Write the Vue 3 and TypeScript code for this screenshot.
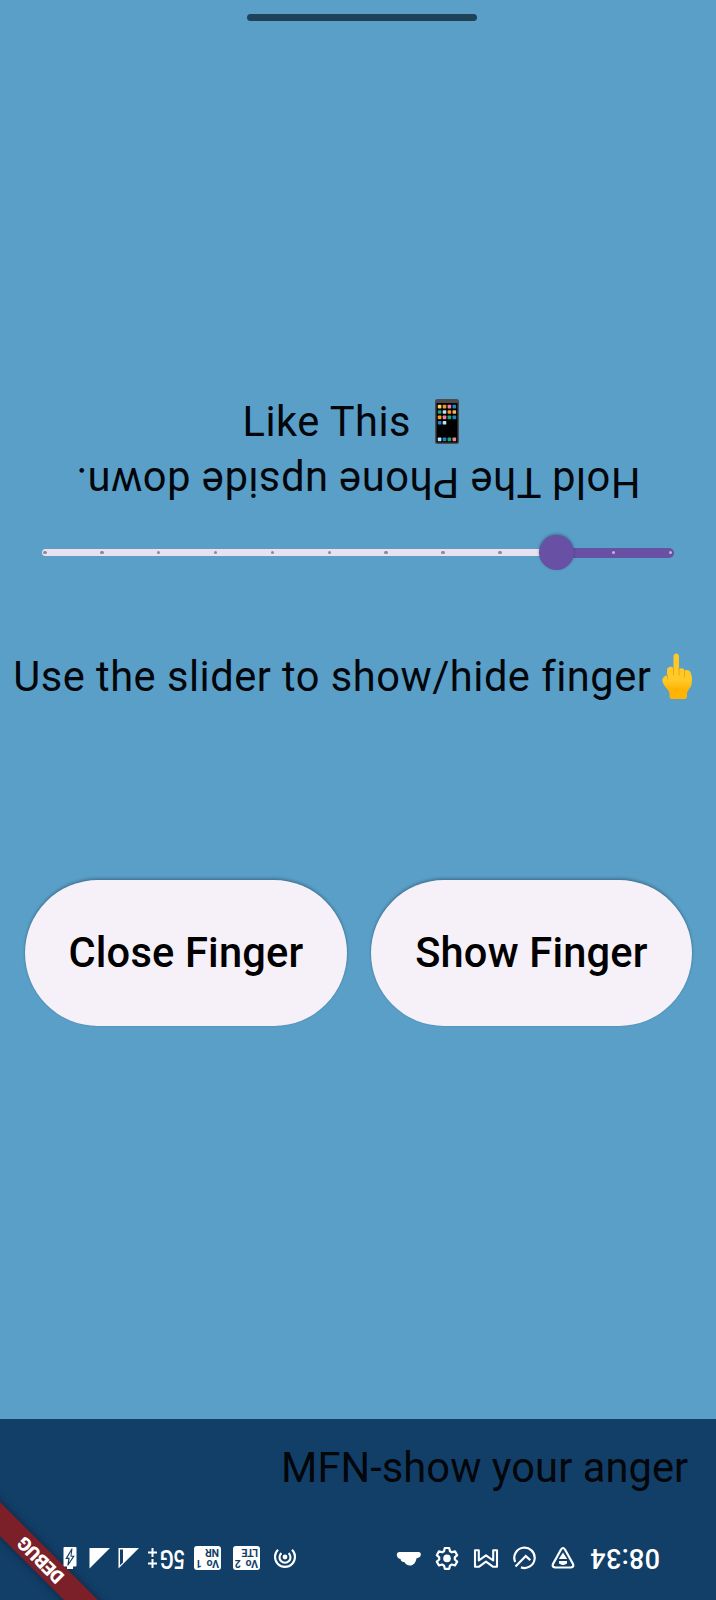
<script setup lang="ts">
import { computed, ref } from 'vue'

const divisions = 11
const value = ref(2)
const activePercent = computed(() => (value.value / divisions) * 100)
const ticks = Array.from({ length: divisions + 1 }, (_, i) => ({
  id: i,
  left: (i / divisions) * 100,
  active: i > divisions - value.value,
}))

const appColors = ['#f6cf7a', '#f59a23', '#f27fa0', '#1f86c8', '#19a974', '#b9e3f7', '#f59a23', '#f6b55a', '#f59a23', '#f27fa0', '#19a974', '#1f86c8', '#1f86c8', '#b9e3f7']
const dockColors = ['#b9e3f7', '#1f86c8', '#19a974', '#f27fa0']
</script>

<template>
  <div class="screen">
    <div class="home-row"><div class="home-bar"></div></div>

    <main class="content">
      <div class="line like">
        <span class="like-text">Like This</span>
        <svg class="phone" width="26" height="47" viewBox="0 0 26 47">
          <rect x="1" y="1" width="24" height="45" rx="2.5" fill="#4b4b4d" />
          <rect x="2.5" y="5" width="21" height="39.5" fill="#000" />
          <rect v-for="(c, i) in appColors" :key="'a' + i" :x="3.8 + (i % 4) * 4.9" :y="6.8 + Math.floor(i / 4) * 5.4" width="3.6" height="3.6" rx=".7" :fill="c" />
          <rect v-for="(c, i) in dockColors" :key="'d' + i" :x="3.8 + i * 4.9" y="39.5" width="3.6" height="3.8" rx=".7" :fill="c" />
        </svg>
      </div>
      <div class="line hold">Hold The Phone upside down.</div>

      <div class="slider">
        <div class="rail">
          <div class="active" :style="{ width: activePercent + '%' }"></div>
          <i v-for="t in ticks" :key="t.id" class="tick" :class="{ on: t.active }" :style="{ left: t.left + '%' }"></i>
          <div class="thumb" :style="{ right: activePercent + '%' }"></div>
        </div>
      </div>

      <div class="line use">
        <span class="use-text">Use the slider to show/hide finger</span>
        <svg class="finger" width="32" height="48" viewBox="0 0 32 48">
          <defs>
            <linearGradient id="skin" x1="0" y1="0" x2="0" y2="1">
              <stop offset=".6" stop-color="#ffc927" />
              <stop offset=".78" stop-color="#ffb404" />
            </linearGradient>
          </defs>
          <path d="M12.500 22V4.500c0-4 5.500-4 5.500 0V17c2-1.500 5-1 5.500 1.500 2.500-1.500 6 0 6.500 3 1.500 4 1 8 .3 12-.8 3-4.300 5-4.300 8v3c0 1.500-.7 2.500-2.200 2.500H11c-1.500 0-2.500-1-2.500-2.500v-3C8.500 38 3 35 1.700 30c-1-3 .8-6 4.300-6.500V17.500c1-3.500 5.500-3.500 6.500-1z" fill="url(#skin)" />
          <path d="M12.500 16v7M18 16v7M23.500 18.500V25M6.500 23v4" fill="none" stroke="#e9a51b" stroke-width="1" stroke-linecap="round" />
        </svg>
      </div>

      <div class="buttons">
        <button class="close" type="button"><span>Close Finger</span></button>
        <button class="show" type="button"><span>Show Finger</span></button>
      </div>
    </main>

    <footer class="bar">
      <div class="title"><span>MFN-show your anger</span></div>
      <div class="status">
        <svg class="battery" width="14" height="24" viewBox="0 0 14 24">
          <path d="M1.500 1h11A1 1 0 0 1 13.500 2v17.500a1 1 0 0 1-1 1H10V23H4v-2.500H1.500a1 1 0 0 1-1-1V2a1 1 0 0 1 1-1z" fill="#fff" />
          <path d="M8.500 2.500 2.300 13h3l-1 6.500h1L11.800 9.800H8.500l1-7.300z" fill="#123f68" />
          <path d="M8 5.500 4.500 11.800h2.200L6 16.500l3.700-5.700H7.500z" fill="#fff" />
        </svg>
        <svg class="sig1" width="22" height="24" viewBox="0 0 22 24"><path d="M.5 2H21L.5 22.500z" fill="#fff" /></svg>
        <svg class="sig2" width="22" height="24" viewBox="0 0 22 24">
          <path d="M.5 2H21L.5 22.500z" fill="#fff" />
          <path d="M2 3.500h3v13L2 19.300z" fill="#123f68" />
        </svg>
        <svg class="plus" width="9" height="24" viewBox="0 0 9 24"><path d="M0 6.500h9M4.500 2v9M0 17.500h9M4.500 13v9" stroke="#fff" stroke-width="2" /></svg>
        <span class="net">5G</span>
        <span class="vo v1"><span class="r1"><b>Vo</b><b>1</b></span><b class="r2">NR</b></span>
        <span class="vo v2"><span class="r1"><b>Vo</b><b>2</b></span><b class="r2">LTE</b></span>
        <svg class="hotspot" width="24" height="24" viewBox="0 0 24 24">
          <circle cx="12" cy="11" r="2.400" fill="#fff" />
          <path d="M8.400 7.100a5.500 5.500 0 1 0 7.200 0M5 3.700a10 10 0 1 0 14 0" fill="none" stroke="#fff" stroke-width="2.100" />
        </svg>
        <span class="spacer"></span>
        <svg class="cloud" width="26" height="24" viewBox="0 0 26 24"><path d="M3.500 6h19C24.500 6 25.500 8 24.500 10c-.8 1.600-2.300 2-4 2.200-.5 4-3 7.300-6.500 7.300-2.700 0-4.500-1.500-5.700-3.500-2 .3-3.500-1-3.800-3C2 12.500.8 10.500.8 8.700.8 7 2 6 3.500 6z" fill="#fff" /></svg>
        <svg class="gear" width="24" height="24" viewBox="0 0 24 24">
          <path d="M9.800 2h4.400l.8 3.200 1.900 1.100 3.100-1 2.200 3.900-2.400 2.100v2.200l2.400 2.100-2.200 3.900-3.100-1-1.900 1.100-.8 3.200H9.800L9 19.600l-1.900-1.100-3.100 1-2.200-3.900 2.400-2.100v-2.200L1.800 9.200 4 5.300l3.100 1L9 5.200z" fill="none" stroke="#fff" stroke-width="2.200" stroke-linejoin="round" />
          <circle cx="12" cy="12.400" r="3.800" fill="#fff" />
        </svg>
        <svg class="mail" width="26" height="24" viewBox="0 0 26 24"><path d="M2 20.800h3.800L13 15.600l7.200 5.200H24V4.200h-3.800v10.300L13 9.400l-7.200 5.100V4.200H2z" fill="none" stroke="#fff" stroke-width="2.100" stroke-linejoin="round" /></svg>
        <svg class="nav" width="24" height="24" viewBox="0 0 24 24">
          <path d="M2.200 16A10.200 10.200 0 1 1 8 21.400M2.500 20.500l10.300-10.400 4.500 4" fill="none" stroke="#fff" stroke-width="2.200" />
        </svg>
        <svg class="tri" width="24" height="24" viewBox="0 0 24 24">
          <path d="M10 3.500q2-3 4 0l8 14.500q1.200 3-2 3.500H4q-3.200-.5-2-3.500z" fill="none" stroke="#fff" stroke-width="2.200" />
          <path d="m12 6.500 4.200 6.500H7.800zM8 15h8v2.500l-3 1.500h-2l-3-1.500z" fill="#fff" />
        </svg>
        <time class="clock">08:34</time>
      </div>
    </footer>

    <div class="debug"><span>DEBUG</span></div>
  </div>
</template>

<style>
body { margin: 0; background: #599fc8; }
</style>

<style scoped>
.screen { position: relative; display: flex; flex-direction: column; width: 716px; height: 1600px; overflow: hidden; background: #599fc8; color: #03060a; font-family: Roboto, sans-serif; font-size: 41.6px; }
.home-row { display: flex; box-sizing: border-box; height: 392px; padding: 14px 0 0 247px; }
.home-bar { width: 230px; height: 7px; border-radius: 4px; background: #1f4259; }
.content { display: flex; flex-direction: column; height: 1027px; }
.line { display: flex; height: 60px; line-height: 60px; white-space: nowrap; letter-spacing: .5px; flex: none; }
.like { padding-left: 242.500px; }
.like-text { width: 191.500px; }
.phone { margin-top: 6px; }
.hold { transform: rotate(180deg); padding-left: 75.500px; letter-spacing: .52px; }
.slider { height: 134px; flex: none; box-sizing: border-box; padding: 37px 45.500px 0 45px; }
.rail { position: relative; height: 7px; background: #e8e1ef; box-shadow: -3px 0 0 #e8e1ef; border-radius: 4px; }
.active { position: absolute; right: -3.500px; top: -1.500px; height: 10px; border-radius: 0 5px 5px 0; background: #6850a4; }
.tick { position: absolute; top: 2px; width: 3.400px; height: 3.400px; margin-left: -1.700px; border-radius: 50%; background: #8f8899; }
.tick.on { background: #c3b5df; }
.thumb { position: absolute; top: -14px; width: 35px; height: 35px; margin-right: -17.500px; border-radius: 50%; background: #6850a4; box-shadow: 0 -1px 3px rgba(0, 0, 0, .3); }
.use { padding-left: 13.300px; line-height: 62px; }
.use-text { width: 647.700px; }
.finger { margin-top: 6px; }
.buttons { display: flex; gap: 24px; padding: 174px 0 0 24.500px; }
button { flex: none; height: 146px; padding: 0; border: 0; border-radius: 73px; background: #f6f1f9; color: #000; font: 500 41.6px Roboto, sans-serif; letter-spacing: .2px; box-shadow: 0 -2px 3px rgba(0, 0, 0, .22), 0 0 2px rgba(0, 0, 0, .15); white-space: nowrap; }
button span { position: relative; top: -1px; left: .2px; }
.close { width: 322.500px; }
.show { width: 320.500px; }
.bar { height: 181px; background: #123f68; }
.title { display: flex; box-sizing: border-box; height: 127px; padding: 18.500px 0 0 281px; line-height: 60px; white-space: nowrap; letter-spacing: .08px; }
.status { position: relative; z-index: 1; display: flex; align-items: flex-start; height: 24px; padding: 0 56px 0 62.500px; color: #fff; }
.status svg { flex: none; }
.sig1 { margin-left: 12px; }
.sig2 { margin-left: 7px; }
.plus { margin-left: 8.500px; }
.net { width: 30px; height: 24px; margin: 0 -1.500px 0 .5px; transform: rotate(180deg) scaleX(.82); font-size: 25px; font-weight: 500; line-height: 24px; text-align: center; }
.vo { display: flex; flex-direction: column; box-sizing: border-box; width: 27px; height: 24px; padding: 1px 2px; border-radius: 3px; background: #fff; color: #123f68; transform: rotate(180deg); font-size: 10.500px; line-height: 11px; letter-spacing: -.2px; }
.r1 { display: flex; justify-content: space-between; }
.v1 { margin-left: 8px; }
.v2 { margin-left: 11.500px; }
.hotspot { margin-left: 13.500px; }
.spacer { flex: 1; }
.gear { margin-left: 13.500px; }
.mail { margin-left: 14px; }
.nav { margin-left: 13.500px; }
.tri { margin-left: 14px; }
.clock { width: 70px; height: 24px; margin-left: 15.500px; transform: rotate(180deg); font-size: 27px; font-weight: 500; line-height: 24px; letter-spacing: .3px; }
.debug { position: absolute; left: -59px; top: 1548px; width: 200px; height: 24px; transform: rotate(225deg); background: #7b1f29; color: #fff; box-shadow: 0 0 10px rgba(0, 0, 0, .4); font-size: 18.500px; font-weight: 900; line-height: 24px; letter-spacing: -.5px; text-align: center; }
</style>
